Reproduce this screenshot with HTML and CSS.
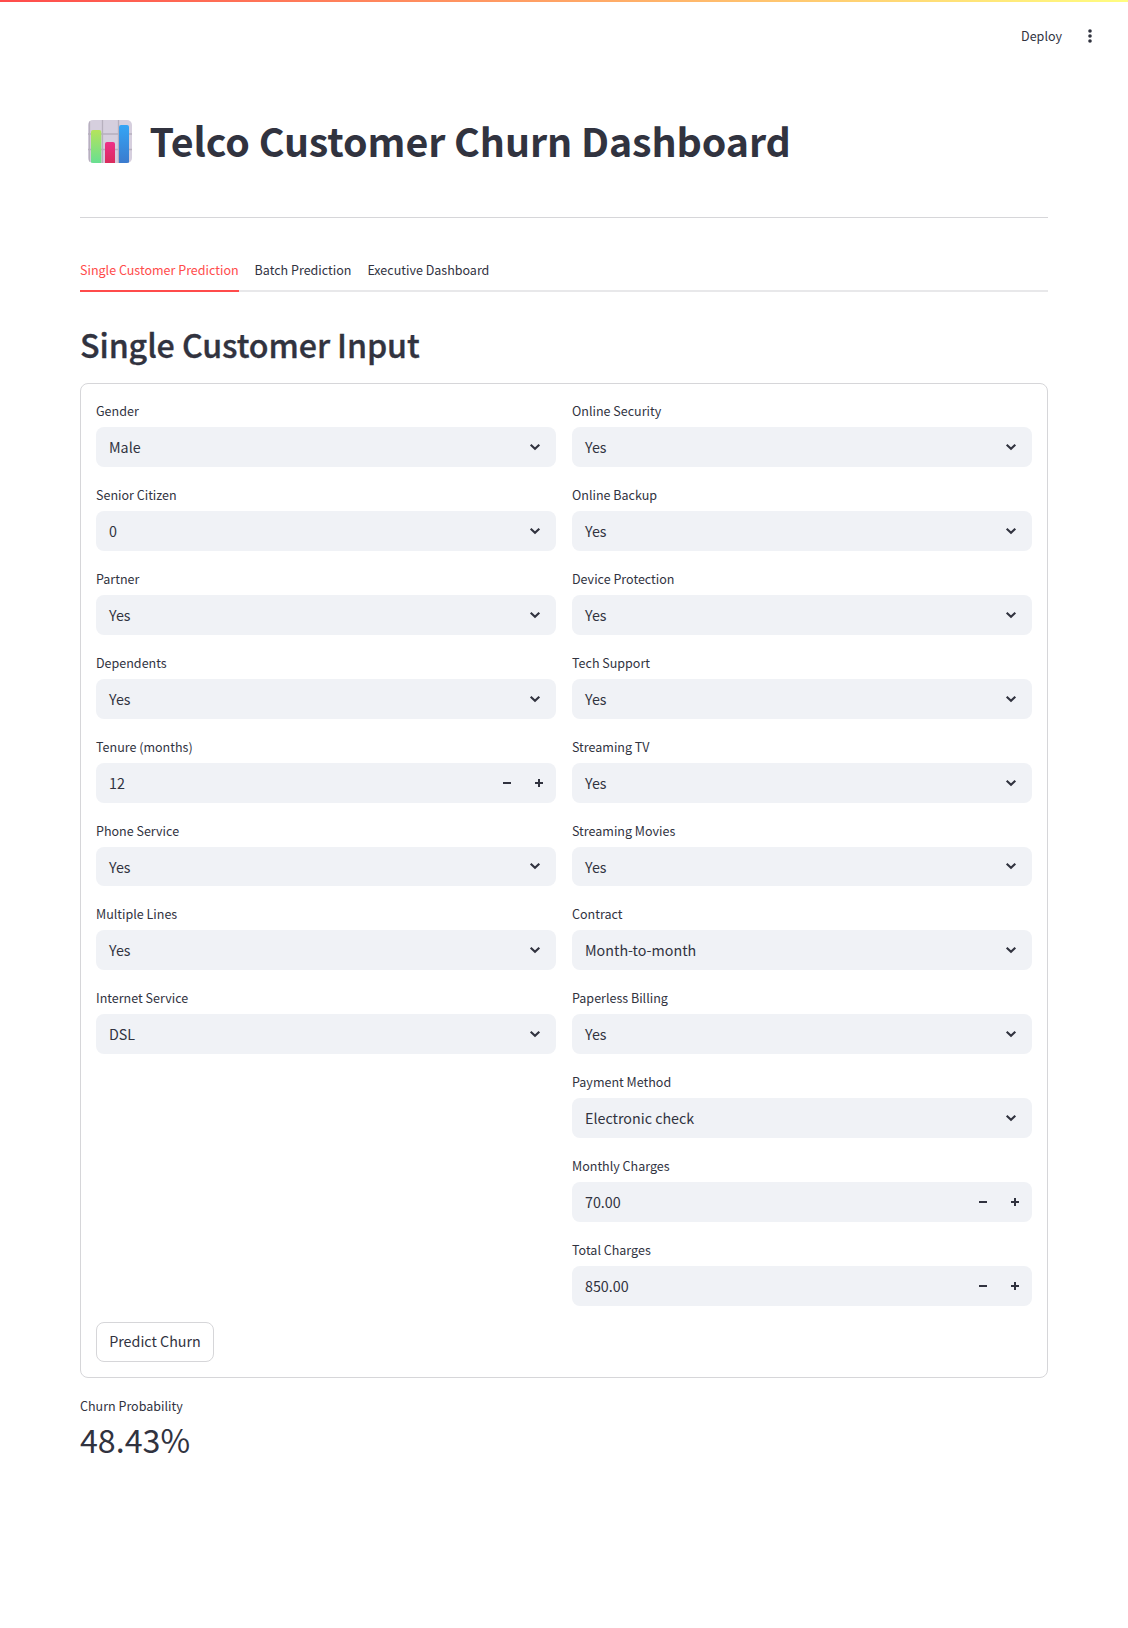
FILE: index.html
```html
<!DOCTYPE html>
<html lang="en">
<head>
<meta charset="utf-8">
<title>Telco Customer Churn Dashboard</title>
<link rel="stylesheet" href="styles.css">
</head>
<body>
<svg class="defs" width="0" height="0" aria-hidden="true">
  <symbol id="chev" viewBox="0 0 12 8"><path d="M1.7 1.7 6 5.8 10.3 1.7" fill="none" stroke="#31333f" stroke-width="2.1"/></symbol>
  <symbol id="minus" viewBox="0 0 8 8"><path d="M0 3h8v2H0z" fill="#31333f"/></symbol>
  <symbol id="plus" viewBox="0 0 8 8"><path d="M3 0h2v3h3v2H5v3H3V5H0V3h3z" fill="#31333f"/></symbol>
</svg>
<div class="decoration"></div>
<header class="toolbar">
  <span class="deploy">Deploy</span>
  <svg class="dots" width="4" height="14" viewBox="0 0 4 14" fill="#31333f"><circle cx="2" cy="2" r="1.8"/><circle cx="2" cy="7" r="1.8"/><circle cx="2" cy="12" r="1.8"/></svg>
</header>
<main class="page">
  <h1 class="title">
    <svg class="chart" width="44" height="43" viewBox="0 0 44 43">
      <defs>
        <linearGradient id="g" x2="0" y2="1"><stop stop-color="#b5e35c"/><stop offset="1" stop-color="#68df91"/></linearGradient>
        <linearGradient id="r" x2="0" y2="1"><stop stop-color="#ed2f88"/><stop offset="1" stop-color="#d92c5c"/></linearGradient>
        <linearGradient id="b" x2="0" y2="1"><stop stop-color="#35a5f5"/><stop offset="1" stop-color="#3b7bce"/></linearGradient>
        <clipPath id="c"><rect width="44" height="43" rx="5"/></clipPath>
      </defs>
      <g clip-path="url(#c)">
        <rect width="44" height="43" fill="#d6cfde"/>
        <path d="M14.5 0v43M30.5 0v43M0 14h44M0 29.500h44M1.500 0v43" stroke="#b7b0be" stroke-width="1.3" fill="none"/>
        <path d="M3 43V12q0-2 2-2h6.300q2 0 2 2v31z" fill="url(#g)"/>
        <path d="M17 43V24q0-2 2-2h6q2 0 2 2v19z" fill="url(#r)"/>
        <path d="M31 43V7q0-2 2-2h6q2 0 2 2v36z" fill="url(#b)"/>
      </g>
    </svg>
    <span>Telco Customer Churn Dashboard</span>
  </h1>
  <hr class="rule">
  <nav class="tabs">
    <span class="tab active">Single Customer Prediction</span>
    <span class="tab">Batch Prediction</span>
    <span class="tab">Executive Dashboard</span>
  </nav>
  <h2 class="heading">Single Customer Input</h2>
  <form class="form">
    <div class="columns">
      <div class="column">
        <div class="field"><label>Gender</label><div class="box"><span>Male</span><svg class="chev"><use href="#chev"/></svg></div></div>
        <div class="field"><label>Senior Citizen</label><div class="box"><span>0</span><svg class="chev"><use href="#chev"/></svg></div></div>
        <div class="field"><label>Partner</label><div class="box"><span>Yes</span><svg class="chev"><use href="#chev"/></svg></div></div>
        <div class="field"><label>Dependents</label><div class="box"><span>Yes</span><svg class="chev"><use href="#chev"/></svg></div></div>
        <div class="field"><label>Tenure (months)</label><div class="box number"><span>12</span><svg class="step"><use href="#minus"/></svg><svg class="step"><use href="#plus"/></svg></div></div>
        <div class="field"><label>Phone Service</label><div class="box"><span>Yes</span><svg class="chev"><use href="#chev"/></svg></div></div>
        <div class="field"><label>Multiple Lines</label><div class="box"><span>Yes</span><svg class="chev"><use href="#chev"/></svg></div></div>
        <div class="field"><label>Internet Service</label><div class="box"><span>DSL</span><svg class="chev"><use href="#chev"/></svg></div></div>
      </div>
      <div class="column">
        <div class="field"><label>Online Security</label><div class="box"><span>Yes</span><svg class="chev"><use href="#chev"/></svg></div></div>
        <div class="field"><label>Online Backup</label><div class="box"><span>Yes</span><svg class="chev"><use href="#chev"/></svg></div></div>
        <div class="field"><label>Device Protection</label><div class="box"><span>Yes</span><svg class="chev"><use href="#chev"/></svg></div></div>
        <div class="field"><label>Tech Support</label><div class="box"><span>Yes</span><svg class="chev"><use href="#chev"/></svg></div></div>
        <div class="field"><label>Streaming TV</label><div class="box"><span>Yes</span><svg class="chev"><use href="#chev"/></svg></div></div>
        <div class="field"><label>Streaming Movies</label><div class="box"><span>Yes</span><svg class="chev"><use href="#chev"/></svg></div></div>
        <div class="field"><label>Contract</label><div class="box"><span>Month-to-month</span><svg class="chev"><use href="#chev"/></svg></div></div>
        <div class="field"><label>Paperless Billing</label><div class="box"><span>Yes</span><svg class="chev"><use href="#chev"/></svg></div></div>
        <div class="field"><label>Payment Method</label><div class="box"><span>Electronic check</span><svg class="chev"><use href="#chev"/></svg></div></div>
        <div class="field"><label>Monthly Charges</label><div class="box number"><span>70.00</span><svg class="step"><use href="#minus"/></svg><svg class="step"><use href="#plus"/></svg></div></div>
        <div class="field"><label>Total Charges</label><div class="box number"><span>850.00</span><svg class="step"><use href="#minus"/></svg><svg class="step"><use href="#plus"/></svg></div></div>
      </div>
    </div>
    <button class="submit" type="button">Predict Churn</button>
  </form>
  <section class="metric">
    <div class="metric-label">Churn Probability</div>
    <div class="metric-value">48.43%</div>
  </section>
</main>
</body>
</html>
```
FILE: styles.css
```css
* { box-sizing: border-box; }
body {
  margin: 0;
  min-height: 1628px;
  background: #fff;
  color: #31333f;
  font-family: "Noto Sans CJK SC", "Noto Sans", sans-serif;
  font-size: 14.31px;
}
.defs { display: block; }
.decoration { height: 2px; background: linear-gradient(90deg, #ff4b4b, #fffd80); }
.toolbar {
  display: flex;
  justify-content: flex-end;
  align-items: center;
  gap: 26px;
  height: 68px;
  padding-right: 36px;
}
.deploy { font-size: 12.52px; line-height: 22px; }
.page { padding: 0 80px; }
.title {
  display: flex;
  align-items: center;
  gap: 17.5px;
  height: 53px;
  margin: 43px 0 51px;
  padding-left: 8px;
  font-size: 39.36px;
  font-weight: 700;
  letter-spacing: -0.1px;
  line-height: 54px;
  white-space: nowrap;
}
.chart { margin-top: 4px; }
.rule { height: 1px; margin: 0 0 32px; border: 0; background: #d6d6d9; }
.tabs {
  display: flex;
  gap: 16px;
  height: 42px;
  box-shadow: inset 0 -2px #e8e8ea;
  font-size: 12.52px;
  line-height: 40px;
}
.active { color: #ff4b4b; box-shadow: inset 0 -2px #ff4b4b; }
.heading {
  margin: 30px 0 17px;
  font-size: 32.2px;
  font-weight: 500;
  letter-spacing: -0.1px;
  line-height: 44px;
  -webkit-text-stroke: 0.35px #31333f;
}
.form {
  height: 995px;
  padding: 15px;
  border: 1px solid #d6d6d9;
  border-radius: 8px;
}
.columns { display: grid; grid-template-columns: 1fr 1fr; gap: 16px; }
.column { display: flex; flex-direction: column; gap: 16px; }
.field label { display: block; height: 28px; font-size: 12.52px; line-height: 24px; }
.box {
  display: flex;
  align-items: center;
  height: 39.92px;
  padding: 0 15px 0 13px;
  border-radius: 8px;
  background: #f0f2f6;
  line-height: 39.9px;
}
.box span { flex: 1; }
.chev { width: 12px; height: 8px; }
.number { gap: 24px; padding-right: 13px; }
.step { width: 8px; height: 8px; }
.submit {
  display: block;
  width: 118px;
  height: 40px;
  margin-top: 16px;
  padding: 0 0 2px;
  border: 1px solid #d6d6d9;
  border-radius: 8px;
  background: #fff;
  color: inherit;
  font: inherit;
  line-height: 36px;
}
.metric { margin-top: 16px; }
.metric-label { font-size: 12.52px; line-height: 24px; }
.metric-value { font-size: 32.2px; line-height: 42px; }
```
